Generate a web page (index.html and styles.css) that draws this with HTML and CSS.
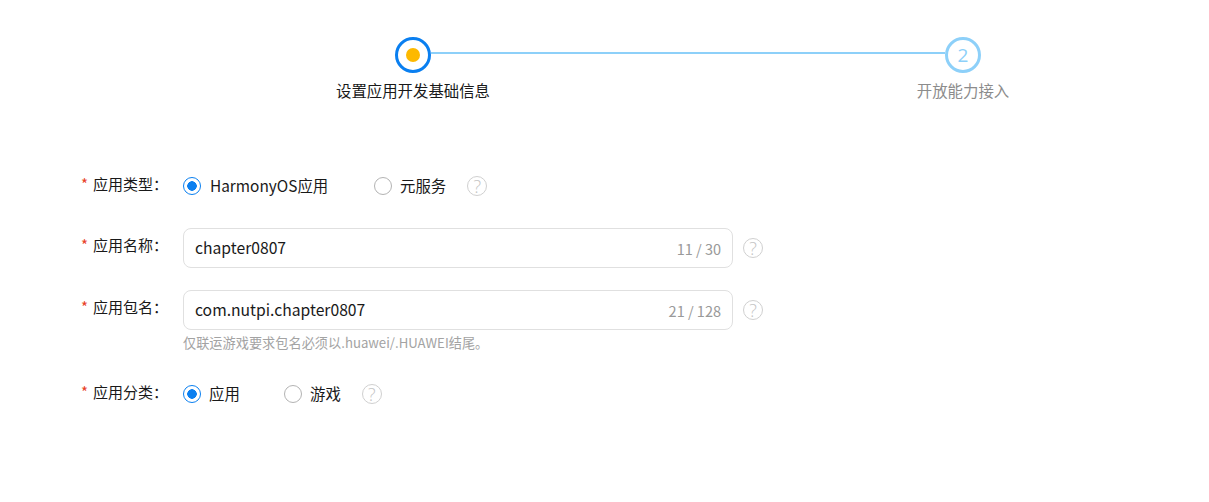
FILE: index.html
```html
<!DOCTYPE html>
<html lang="zh-CN">

<head>
    <meta charset="UTF-8">
    <meta name="viewport" content="width=device-width, initial-scale=1.0">
    <title>设置应用开发基础信息</title>

    <link rel="stylesheet" href="styles.css">
</head>

<body>

    <div class="steps">
        <div class="step-track">
            <span class="step-dot step-active"><span class="step-core"></span></span>
            <span class="step-line"></span>
            <span class="step-dot step-next">2</span>
        </div>
        <div class="step-labels">
            <span class="step-label">设置应用开发基础信息</span>
            <span class="step-label step-label-next">开放能力接入</span>
        </div>
    </div>

    <form class="form">
        <div class="row row-type">
            <label class="row-label"><span class="req">*</span>应用类型：</label>
            <div class="radio radio-on radio-wide">
                <span class="radio-mark"></span>HarmonyOS应用
            </div>
            <div class="radio">
                <span class="radio-mark"></span>元服务
            </div>
            <span class="help">?</span>
        </div>

        <div class="row row-name">
            <label class="row-label"><span class="req">*</span>应用名称：</label>
            <div class="field">
                <span class="field-value">chapter0807</span>
                <span class="field-count">11 / 30</span>
            </div>
            <span class="help help-field">?</span>
        </div>

        <div class="row row-package">
            <label class="row-label"><span class="req">*</span>应用包名：</label>
            <div class="field">
                <span class="field-value">com.nutpi.chapter0807</span>
                <span class="field-count">21 / 128</span>
            </div>
            <span class="help help-field">?</span>
        </div>
        <p class="hint">仅联运游戏要求包名必须以.huawei/.HUAWEI结尾。</p>

        <div class="row row-category">
            <label class="row-label"><span class="req">*</span>应用分类：</label>
            <div class="radio radio-on radio-short">
                <span class="radio-mark"></span>应用
            </div>
            <div class="radio">
                <span class="radio-mark"></span>游戏
            </div>
            <span class="help">?</span>
        </div>
    </form>

</body>

</html>
```

FILE: styles.css
```css
body {
    margin: 0;
    height: 502px;
    overflow: hidden;
    background: #fff;
    color: #191919;
    font-family: "Noto Sans CJK SC", "Open Sans", sans-serif;
    font-size: 15.4px;
}

.steps {
    padding-top: 37px;
}

.step-track {
    display: flex;
    align-items: center;
    width: 586px;
    margin-left: 395px;
}

.step-dot {
    box-sizing: border-box;
    display: flex;
    align-items: center;
    justify-content: center;
    width: 36px;
    height: 36px;
    border-radius: 50%;
    flex: none;
}

.step-active {
    border: 3px solid #0a7ff0;
}

.step-core {
    width: 14px;
    height: 14px;
    border-radius: 50%;
    background: #fdb900;
}

.step-next {
    border: 3px solid #8dd0f9;
    color: #8dd0f9;
    font-family: "Open Sans", sans-serif;
    font-size: 19px;
}

.step-line {
    flex: 1;
    height: 2px;
    margin-top: -4px;
    background: #8dd0f9;
}

.step-labels {
    display: flex;
    justify-content: space-between;
    width: 750px;
    margin: 5px 0 0 313px;
    line-height: 24px;
}

.step-label {
    width: 200px;
    text-align: center;
}

.step-label-next {
    color: #8c8c8c;
}

.form {
    padding: 72px 0 0 81px;
}

.row {
    display: flex;
    align-items: center;
}

.row-label {
    width: 102px;
    flex: none;
    margin-top: -5px;
    font-size: 15px;
    white-space: nowrap;
}

.req {
    color: #e84026;
    margin-right: 5px;
}

.row-type {
    height: 24px;
}

.row-name {
    height: 40px;
    margin-top: 30px;
}

.row-package {
    height: 40px;
    margin-top: 22px;
}

.row-name .row-label,
.row-package .row-label {
    margin-top: -8px;
}

.row-category {
    height: 24px;
    margin-top: 30px;
}

.radio {
    display: flex;
    align-items: center;
    padding-bottom: 2px;
}

.radio-wide {
    width: 191px;
}

.radio-short {
    width: 101px;
}

.radio-mark {
    box-sizing: border-box;
    width: 18px;
    height: 18px;
    margin: 2px 8px 0 0;
    border: 1px solid #b3b3b3;
    border-radius: 50%;
}

.row-type .radio-on .radio-mark {
    margin-right: 9px;
}

.radio-on .radio-mark {
    border-color: #0a7ff0;
    background: radial-gradient(circle, #0a7ff0 0 4.5px, #fff 5px);
}

.help {
    box-sizing: border-box;
    display: flex;
    align-items: center;
    justify-content: center;
    width: 20px;
    height: 20px;
    margin-left: 21px;
    border: 1.5px solid #d0d0d0;
    border-radius: 50%;
    color: #c4c4c4;
    font-family: "Open Sans", sans-serif;
    font-size: 18px;
    font-weight: 300;
}

.help-field {
    margin-left: 10px;
}

.field {
    box-sizing: border-box;
    display: flex;
    align-items: center;
    justify-content: space-between;
    width: 550px;
    height: 40px;
    padding: 0 11px;
    border: 1px solid #e0e0e0;
    border-radius: 8px;
}

.field-value {
    margin-top: -2px;
    font-size: 15.7px;
}

.field-count {
    color: #999;
    font-size: 14.5px;
}

.hint {
    margin: 4px 0 0 102px;
    color: #a3a3a3;
    font-size: 13.2px;
    line-height: 18px;
}
```
